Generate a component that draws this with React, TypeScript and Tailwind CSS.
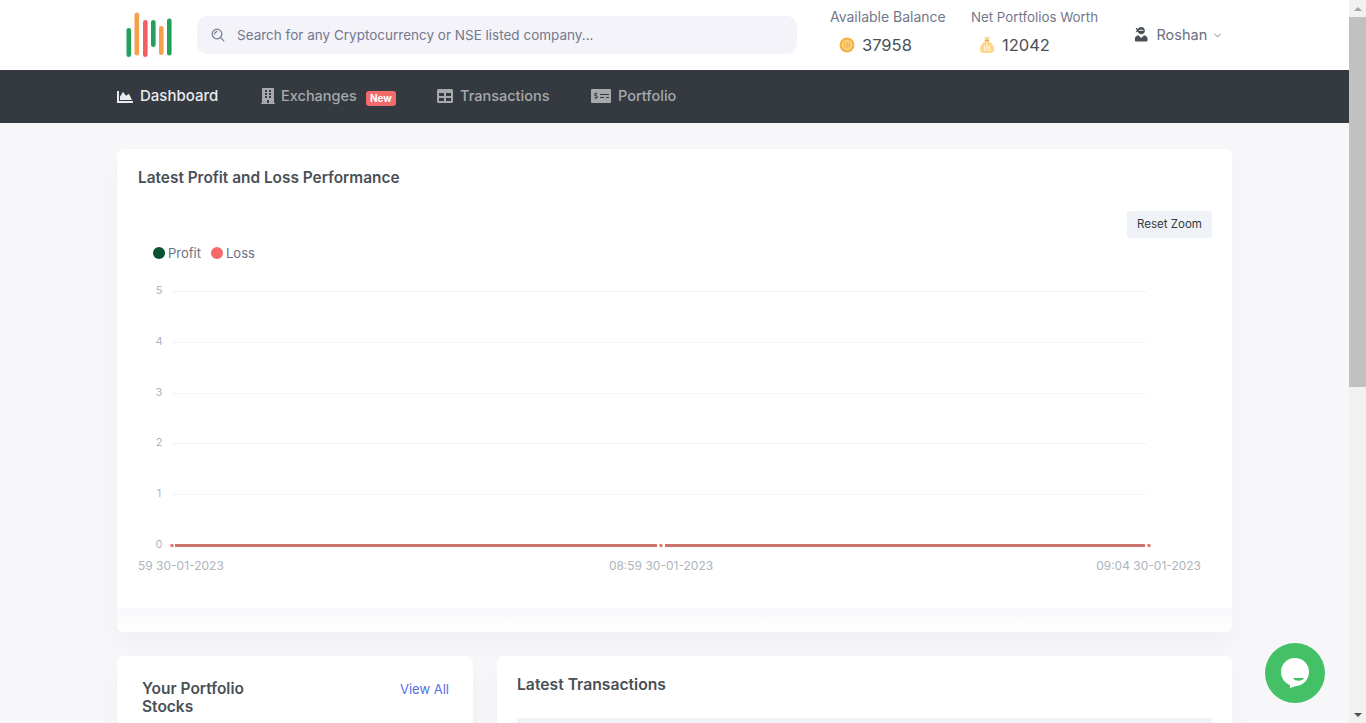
import { FaBuilding, FaChartArea, FaMoneyCheckAlt, FaTable, FaUserNinja } from 'react-icons/fa';
import { FiChevronDown } from 'react-icons/fi';

const navItems = [
  { label: 'Dashboard', icon: FaChartArea, active: true, width: 'w-[143px]', iconClass: 'text-[16px] mr-[7px]' },
  { label: 'Exchanges', icon: FaBuilding, badge: 'New', width: 'w-[177px]', iconClass: 'text-[16px] mr-[5px]' },
  { label: 'Transactions', icon: FaTable, width: 'w-[154px]', iconClass: 'text-[16px] mr-[7px]' },
  { label: 'Portfolio', icon: FaMoneyCheckAlt, width: 'w-[120px]', iconClass: 'text-[20px] mr-[7px]' },
];

const logoBars = [
  { x: 126.5, y: 28, h: 29, color: '#23a05b' },
  { x: 134.5, y: 12.5, h: 43, color: '#f7a04b' },
  { x: 143, y: 20, h: 37, color: '#f1605f' },
  { x: 151, y: 20, h: 27, color: '#23a05b' },
  { x: 159, y: 26, h: 29, color: '#f7a04b' },
  { x: 167, y: 18.5, h: 37, color: '#23a05b' },
];

// y positions are relative to the top of the chart svg
const gridLines = [
  { label: '5', y: 29.5 },
  { label: '4', y: 80.5 },
  { label: '3', y: 131.5 },
  { label: '2', y: 181.5 },
  { label: '1', y: 232.5 },
  { label: '0', y: 283.5 },
];

function Logo() {
  return (
    <svg width="80" height="70" viewBox="117 0 80 70" className="shrink-0">
      {logoBars.map((bar) => (
        <rect key={bar.x} x={bar.x} y={bar.y} width="4.6" height={bar.h} rx="2.3" fill={bar.color} />
      ))}
    </svg>
  );
}

function SearchIcon() {
  return (
    <svg width="14" height="14" viewBox="0 0 14 14" fill="none" stroke="#74788d" strokeWidth="1.2" strokeLinecap="round">
      <circle cx="6" cy="6" r="4.8" />
      <path d="M3.7 6a2.3 2.3 0 0 1 2.3-2.3" />
      <path d="M9.6 9.6l3.2 3.2" />
    </svg>
  );
}

function CoinIcon() {
  return (
    <svg width="16" height="16" viewBox="0 0 16 16">
      <circle cx="8" cy="8" r="7.5" fill="#f3b245" />
      <circle cx="8" cy="8" r="5.3" fill="#f8d27f" />
      <path d="M5 5.5h1.2v5H5zM7.4 4.5h1.2v6.5H7.4zM9.8 5.5H11v5H9.8z" fill="#eeb044" />
    </svg>
  );
}

function BagIcon() {
  return (
    <svg width="16" height="18" viewBox="0 0 16 18">
      <path d="M5.5 1h5L9.7 5c3 1.5 5.3 5 5.3 8.5 0 2.5-1.5 3.5-3.500 3.500h-7C2.500 17 1 16 1 13.500 1 10 3.300 6.500 6.300 5z" fill="#fbd78f" />
      <path d="M5.8 4.3h4.4" stroke="#ef8f57" strokeWidth="1" />
      <path d="M5 10h1.200v5H5zM7.400 9h1.200v6H7.400zM9.800 10H11v5H9.800z" fill="#fff3d8" />
    </svg>
  );
}

function Header() {
  return (
    <header className="h-[70px] bg-white px-[117px] flex items-center">
      <Logo />
      <div className="w-[600px] h-[38px] rounded-[10px] bg-[#f3f3f9] flex items-center pl-[14px] gap-[12px] shrink-0">
        <SearchIcon />
        <span className="text-[13.5px] text-[#74788d]">Search for any Cryptocurrency or NSE listed company...</span>
      </div>
      <div className="w-[141px] ml-[33px] shrink-0 -mt-[9px]">
        <p className="text-[14px] leading-5 text-[#74788d]">Available Balance</p>
        <div className="flex items-center mt-[8px] pl-[9px] gap-[7px] text-[16.5px] leading-5 text-[#495057]">
          <CoinIcon />
          37958
        </div>
      </div>
      <div className="w-[163px] shrink-0 -mt-[9px]">
        <p className="text-[13.3px] leading-5 text-[#74788d]">Net Portfolios Worth</p>
        <div className="flex items-center mt-[8px] pl-[8px] gap-[7px] text-[16.5px] leading-5 text-[#495057]">
          <BagIcon />
          12042
        </div>
      </div>
      <div className="flex items-center text-[14.5px] text-[#6a6f82]">
        <FaUserNinja className="text-[14.5px] text-[#495057] -mt-[1px]" />
        <span className="ml-[8px]">Roshan</span>
        <FiChevronDown className="ml-[5px] text-[11px]" />
      </div>
    </header>
  );
}

function Nav() {
  return (
    <nav className="h-[53px] bg-[#343a40] px-[117px] flex items-center">
      {navItems.map((item) => (
        <div
          key={item.label}
          className={`${item.width} flex items-center font-medium ${item.active ? 'text-[15px] text-[#e9ecef]' : 'text-[14.5px] text-[#a7a9ac] -mt-[1px]'}`}
        >
          <item.icon className={`${item.iconClass} shrink-0`} />
          {item.label}
          {item.badge && (
            <span className="ml-[9px] mt-[4px] rounded-[3px] bg-[#f46a6a] px-[4px] text-[10px] leading-[15px] font-bold text-white">
              {item.badge}
            </span>
          )}
        </div>
      ))}
    </nav>
  );
}

function ProfitChart() {
  return (
    <svg width="1115" height="346" viewBox="0 0 1115 346" className="block">
      {gridLines.map((line) => (
        <g key={line.label}>
          {line.label !== '0' && <line x1="55" x2="1030" y1={line.y} y2={line.y} stroke="#f3f4f6" />}
          <text x="42" y={line.y + 2} textAnchor="middle" fontSize="11" fill="#adb5bd">
            {line.label}
          </text>
        </g>
      ))}
      <path d="M58 283.5H540M548 283.5H1028" stroke="#c9756d" strokeWidth="3" />
      <circle cx="55" cy="283.5" r="1.7" fill="#f46a6a" />
      <circle cx="544" cy="283.5" r="1.7" fill="#f46a6a" />
      <circle cx="1032" cy="283.5" r="1.7" fill="#f46a6a" />
      <text x="21" y="308" fontSize="12" fill="#adb5bd">59 30-01-2023</text>
      <text x="544" y="308" fontSize="12" fill="#adb5bd" textAnchor="middle">08:59 30-01-2023</text>
      <text x="1084" y="308" fontSize="12" fill="#adb5bd" textAnchor="end">09:04 30-01-2023</text>
    </svg>
  );
}

function ChartCard() {
  return (
    <section className="h-[483px] rounded-[6px] bg-white shadow-[0_12px_24px_rgba(18,38,63,0.03)] flex flex-col overflow-hidden">
      <h2 className="pl-[21px] pt-[19px] text-[15.4px] leading-[20px] font-semibold text-[#495057]">
        Latest Profit and Loss Performance
      </h2>
      <div className="flex justify-end pr-[20px] mt-[23px]">
        <button className="h-[27px] w-[85px] rounded-[3px] bg-[#eff2f7] text-[11.5px] text-[#343a40]">Reset Zoom</button>
      </div>
      <div className="flex items-center h-[20px] pl-[36px] mt-[5px] -mb-[1px] text-[13px] leading-5 text-[#6b7085]">
        <span className="h-[12px] w-[12px] rounded-full bg-[#0b5134] mr-[3px]" />
        Profit
        <span className="h-[12px] w-[12px] rounded-full bg-[#f46a6a] ml-[10px] mr-[3px]" />
        Loss
      </div>
      <ProfitChart />
      <div className="flex-1 bg-gradient-to-b from-[#f7f8fa] to-white" />
    </section>
  );
}

function BottomCards() {
  return (
    <div className="mt-[24px] flex gap-[24px]">
      <section className="w-[356px] h-[200px] rounded-[6px] bg-white shadow-[0_12px_24px_rgba(18,38,63,0.03)] pl-[25px] pr-[24px] pt-[24px] flex justify-between items-start">
        <h2 className="w-[130px] text-[15.5px] leading-[18px] font-semibold text-[#495057]">Your Portfolio Stocks</h2>
        <a className="text-[13px] leading-[18px] text-[#556ee6]">View All</a>
      </section>
      <section className="flex-1 h-[200px] rounded-[6px] bg-white shadow-[0_12px_24px_rgba(18,38,63,0.03)] px-[20px] pt-[19px]">
        <h2 className="text-[15.7px] leading-[20px] font-semibold text-[#495057]">Latest Transactions</h2>
        <div className="mt-[23px] h-[40px] bg-[#eff2f7]" />
      </section>
    </div>
  );
}

function Scrollbar() {
  return (
    <aside className="w-[17px] shrink-0 bg-[#f1f1f1] flex flex-col">
      <div className="h-[17px] flex items-center justify-center">
        <span className="border-x-[4px] border-b-[4px] border-x-transparent border-b-[#a3a3a3]" />
      </div>
      <div className="h-[370px] bg-[#c1c1c1]" />
      <div className="flex-1" />
      <div className="h-[17px] flex items-center justify-center">
        <span className="border-x-[4px] border-t-[4px] border-x-transparent border-t-[#505050]" />
      </div>
    </aside>
  );
}

function ChatButton() {
  return (
    <div className="absolute right-[41px] bottom-[20px] h-[60px] w-[60px] rounded-full bg-[#44c167] flex items-center justify-center">
      <svg width="30" height="32" viewBox="0 0 30 32">
        <circle cx="15" cy="15" r="14" fill="#fff" />
        <path d="M10 25v6l12-4z" fill="#fff" />
        <path d="M13 21h11c-1 3.500-10 3.500-11 0z" fill="#44c167" />
      </svg>
    </div>
  );
}

export default function App() {
  return (
    <div className="relative h-[723px] w-full flex overflow-hidden bg-[#f7f7fa] font-['Inter',sans-serif]">
      <div className="flex-1 min-w-0">
        <Header />
        <Nav />
        <main className="px-[117px] pt-[26px]">
          <ChartCard />
          <BottomCards />
        </main>
      </div>
      <Scrollbar />
      <ChatButton />
    </div>
  );
}
